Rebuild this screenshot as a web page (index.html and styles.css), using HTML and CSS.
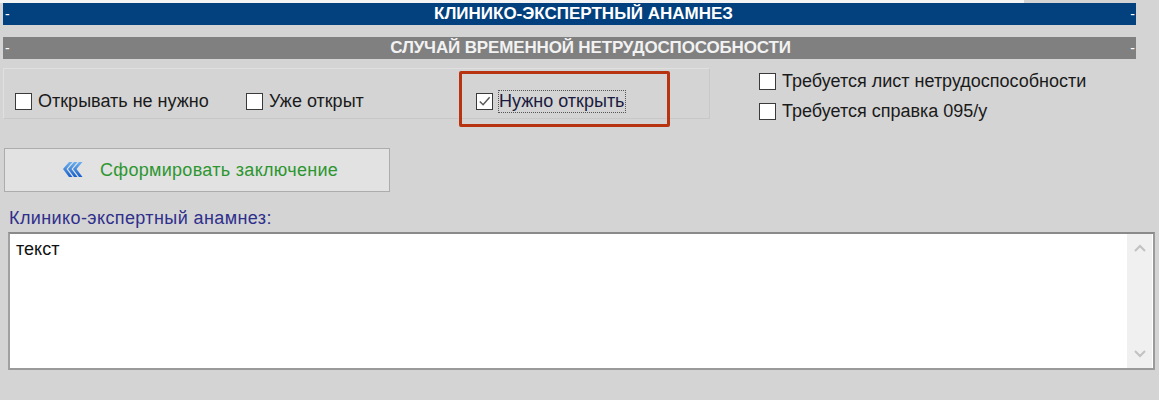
FILE: index.html
```html
<!DOCTYPE html>
<html lang="ru">
<head>
<meta charset="utf-8">
<title>Клинико-экспертный анамнез</title>
<link rel="stylesheet" href="styles.css">
</head>
<body>
<div class="page">
  <div class="topstrip"><div class="topstrip-white"></div></div>
  <div class="bar bar-blue">
    <span class="dash">-</span>
    <span class="bar-title">КЛИНИКО-ЭКСПЕРТНЫЙ АНАМНЕЗ</span>
    <span class="dash">-</span>
  </div>
  <div class="bar bar-gray">
    <span class="dash">-</span>
    <span class="bar-title bar-title-gray">СЛУЧАЙ ВРЕМЕННОЙ НЕТРУДОСПОСОБНОСТИ</span>
    <span class="dash">-</span>
  </div>
  <div class="options">
    <div class="group">
      <label class="check"><span class="box"></span><span>Открывать не нужно</span></label>
      <label class="check"><span class="box"></span><span>Уже открыт</span></label>
      <label class="check"><span class="box box-checked"><svg viewBox="0 0 16 16" width="16" height="16"><path d="M3 8.5 L6.5 12 L13.5 4" fill="none" stroke="#5a5a5a" stroke-width="1.6"/></svg></span><span class="focus">Нужно открыть</span></label>
    </div>
    <div class="side">
      <label class="check"><span class="box"></span><span>Требуется лист нетрудоспособности</span></label>
      <label class="check"><span class="box"></span><span>Требуется справка 095/у</span></label>
    </div>
    <div class="highlight"></div>
  </div>
  <button class="action" type="button">
    <svg class="action-icon" viewBox="0 0 22 18" width="22" height="18">
      <defs>
        <linearGradient id="g" x1="0" y1="0" x2="0" y2="1">
          <stop offset="0" stop-color="#6db0f0"/>
          <stop offset="1" stop-color="#1a5fc8"/>
        </linearGradient>
      </defs>
      <polygon points="0,8 6,1 9.5,1 3.5,8 9.5,16 6,16" fill="url(#g)"/>
      <polygon points="5,8 11,1 14.5,1 8.5,8 14.5,16 11,16" fill="url(#g)"/>
      <polygon points="10,8 16,1 19.5,1 13.5,8 19.5,16 16,16" fill="url(#g)"/>
    </svg>
    <span class="action-text">Сформировать заключение</span>
  </button>
  <div class="field-label">Клинико-экспертный анамнез:</div>
  <div class="textarea">
    <div class="textarea-text">текст</div>
    <div class="scrollbar">
      <svg viewBox="0 0 12 8" width="12" height="8"><path d="M1 7 L6 2 L11 7" fill="none" stroke="#c2c2c2" stroke-width="2"/></svg>
      <svg viewBox="0 0 12 8" width="12" height="8"><path d="M1 1 L6 6 L11 1" fill="none" stroke="#c2c2c2" stroke-width="2"/></svg>
    </div>
  </div>
</div>
</body>
</html>
```

FILE: styles.css
```css
html, body {
  margin: 0;
  padding: 0;
  background: #d4d4d4;
}
body {
  font-family: "Liberation Sans", Arial, sans-serif;
  font-size: 18px;
  color: #1a1a1a;
}
.page {
  position: relative;
  width: 1159px;
  height: 400px;
  overflow: hidden;
}
.topstrip {
  height: 3px;
}
.topstrip-white {
  width: 1024px;
  height: 3px;
  background: #f4f4f4;
}
.bar {
  display: grid;
  grid-template-columns: 20px 1fr 20px;
  align-items: center;
  width: 1133px;
  margin-left: 3px;
  height: 22px;
  color: #fff;
  font-size: 17px;
  font-weight: bold;
}
.bar-blue {
  background: #02407e;
}
.bar-gray {
  background: #808080;
  margin-top: 12px;
}
.dash {
  font-weight: normal;
  font-size: 14px;
  padding-left: 2px;
}
.bar .dash:last-child {
  text-align: right;
  padding-right: 1px;
}
.bar-title {
  text-align: center;
  padding-left: 28px;
  line-height: 22px;
}
.bar-title-gray {
  color: #f2f2f2;
  padding-left: 42px;
  letter-spacing: -0.15px;
}
.options {
  position: relative;
  display: flex;
  height: 86px;
}
.group {
  display: grid;
  grid-template-columns: 231px 230px auto;
  align-items: center;
  box-sizing: border-box;
  width: 707px;
  height: 51px;
  margin-top: 9px;
  margin-left: 3px;
  padding: 15px 0 0 11px;
  border: 1px solid #e0e0e0;
  border-right-color: #c8c8c8;
  border-bottom-color: #c8c8c8;
}
.side {
  display: flex;
  flex-direction: column;
  gap: 12px;
  margin-left: 49px;
  margin-top: 13px;
}
.check {
  display: flex;
  align-items: center;
  gap: 6px;
  height: 18px;
  white-space: nowrap;
}
.box {
  display: flex;
  align-items: center;
  justify-content: center;
  box-sizing: border-box;
  width: 17px;
  height: 17px;
  background: #fff;
  border: 1px solid #3a3a3a;
  flex: none;
}
.focus {
  outline: 1px dotted #555;
  outline-offset: 0;
  color: #1a1a40;
}
.highlight {
  position: absolute;
  left: 459px;
  top: 12px;
  width: 205px;
  height: 50px;
  border: 3px solid #b8330f;
  border-radius: 2px;
}
.action {
  display: flex;
  align-items: center;
  box-sizing: border-box;
  width: 386px;
  height: 44px;
  margin: 3px 0 0 4px;
  padding: 0 0 0 58px;
  background: #e2e2e2;
  border: 1px solid #acacac;
  font-family: "Liberation Sans", Arial, sans-serif;
  font-size: 18px;
  cursor: pointer;
}
.action-icon {
  flex: none;
}
.action-text {
  margin-left: 15px;
  color: #2d9630;
  letter-spacing: 0.3px;
}
.field-label {
  margin: 16px 0 0 9px;
  color: #2f2f8c;
  height: 20px;
  line-height: 20px;
  letter-spacing: 0.4px;
}
.textarea {
  display: flex;
  justify-content: space-between;
  box-sizing: border-box;
  width: 1147px;
  height: 138px;
  margin: 4px 0 0 8px;
  background: #fff;
  border: 2px solid #9a9a9a;
  border-top-color: #8a8a8a;
  border-left-color: #a0a0a0;
}
.textarea-text {
  padding: 5px 0 0 6px;
  color: #111;
}
.scrollbar {
  display: flex;
  flex-direction: column;
  justify-content: space-between;
  align-items: center;
  width: 25px;
  padding: 10px 0 10px;
  margin: 0 1px 0 0;
  background: #f0f0f0;
}
```
